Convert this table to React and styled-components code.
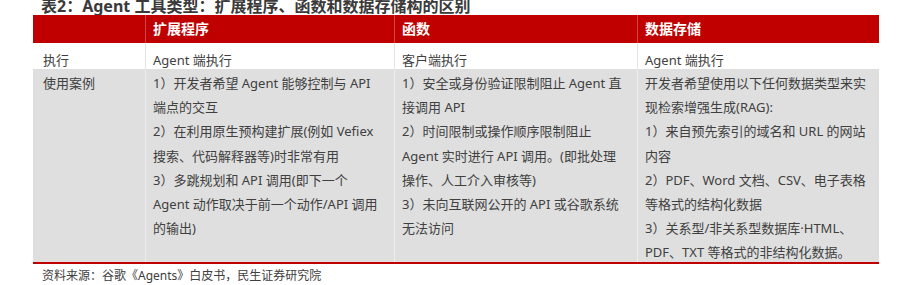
import React from "react";
import styled, { createGlobalStyle } from "styled-components";

const GlobalStyle = createGlobalStyle`
  body {
    margin: 0;
    background: #ffffff;
    font-family: "Noto Sans", "Noto Sans CJK SC", sans-serif;
    color: #404040;
    overflow: hidden;
  }
`;

const Page = styled.div`
  width: 912px;
  height: 285px;
  padding-left: 33px;
  box-sizing: border-box;
`;

const Title = styled.h2`
  margin: -2px 0 0 8px;
  font-size: 16px;
  line-height: 17px;
  font-weight: 700;
  color: #3a3a3a;
  white-space: nowrap;
`;

const Table = styled.div`
  display: grid;
  grid-template-columns: 112px 249px 243px 242px;
  width: 846px;
  border-bottom: 2px solid #c00000;
`;

const tones = {
  head: { bg: "#c00000", line: "rgba(255,255,255,0.28)", color: "#ffffff" },
  plain: { bg: "#ffffff", line: "#e4e4e4", color: "#404040" },
  shade: { bg: "#dfdfdf", line: "#ececec", color: "#404040" },
};

const Cell = styled.div`
  background: ${(p) => tones[p.$tone].bg};
  color: ${(p) => tones[p.$tone].color};
  border-left: 1px solid ${(p) => (p.$first ? "transparent" : tones[p.$tone].line)};
  height: ${(p) => p.$h}px;
  padding: ${(p) => p.$pt}px 4px 0 ${(p) => (p.$first ? 9 : 7)}px;
  box-sizing: border-box;
  font-size: ${(p) => (p.$tone === "head" ? 14 : 13)}px;
  font-weight: ${(p) => (p.$tone === "head" ? 700 : 400)};
  line-height: ${(p) => p.$lh}px;
  overflow: visible;
`;

const Line = styled.div`
  white-space: nowrap;
`;

const Source = styled.div`
  margin-left: 9px;
  font-size: 12px;
  line-height: 24px;
  color: #404040;
`;

const header = ["", "扩展程序", "函数", "数据存储"];

const runRow = ["执行", "Agent 端执行", "客户端执行", "Agent 端执行"];

const cases = [
  ["使用案例"],
  [
    "1）开发者希望 Agent 能够控制与 API",
    "端点的交互",
    "2）在利用原生预构建扩展(例如 Vefiex",
    "搜索、代码解释器等)时非常有用",
    "3）多跳规划和 API 调用(即下一个",
    "Agent 动作取决于前一个动作/API 调用",
    "的输出)",
  ],
  [
    "1）安全或身份验证限制阻止 Agent 直",
    "接调用 API",
    "2）时间限制或操作顺序限制阻止",
    "Agent 实时进行 API 调用。(即批处理",
    "操作、人工介入审核等)",
    "3）未向互联网公开的 API 或谷歌系统",
    "无法访问",
  ],
  [
    "开发者希望使用以下任何数据类型来实",
    "现检索增强生成(RAG):",
    "1）来自预先索引的域名和 URL 的网站",
    "内容",
    "2）PDF、Word 文档、CSV、电子表格",
    "等格式的结构化数据",
    "3）关系型/非关系型数据库·HTML、",
    "PDF、TXT 等格式的非结构化数据。",
  ],
];

export default function App() {
  return (
    <Page>
      <GlobalStyle />
      <Title>表2：Agent 工具类型：扩展程序、函数和数据存储构的区别</Title>
      <Table>
        {header.map((t, i) => (
          <Cell key={"h" + i} $tone="head" $first={i === 0} $h={28} $pt={2} $lh={24}>
            {t}
          </Cell>
        ))}
        {runRow.map((t, i) => (
          <Cell key={"r" + i} $tone="plain" $first={i === 0} $h={26} $pt={5} $lh={24}>
            {t}
          </Cell>
        ))}
        {cases.map((lines, i) => (
          <Cell key={"c" + i} $tone="shade" $first={i === 0} $h={193} $pt={2} $lh={24.2}>
            {lines.map((l, j) => (
              <Line key={j}>{l}</Line>
            ))}
          </Cell>
        ))}
      </Table>
      <Source>资料来源：谷歌《Agents》白皮书，民生证券研究院</Source>
    </Page>
  );
}
